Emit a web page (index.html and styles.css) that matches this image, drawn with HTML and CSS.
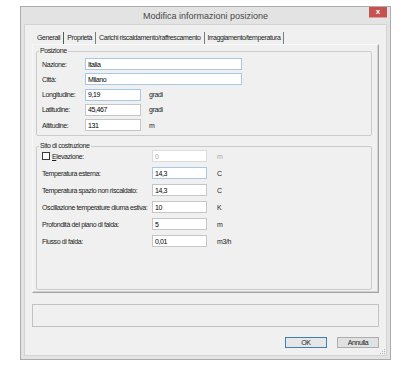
FILE: index.html
```html
<!DOCTYPE html>
<html lang="it">
<head>
    <meta charset="UTF-8">
    <title>Modifica informazioni posizione</title>
    <link rel="stylesheet" href="styles.css">
</head>
<body>
    <div class="window">
        <div class="titlebar">
            <span></span>
            <span class="title">Modifica informazioni posizione</span>
            <span class="close-btn">x</span>
        </div>
        <div class="client">
            <div class="tabs">
                <span class="tab active">Generali</span>
                <span class="tab">Proprietà</span>
                <span class="tab">Carichi riscaldamento/raffrescamento</span>
                <span class="tab">Irraggiamento/temperatura</span>
            </div>

            <div class="tab-page">
                <fieldset class="group">
                    <legend>Posizione</legend>
                    <div class="rows pos-rows">
                        <label>Nazione:</label>
                        <input type="text" class="field hot wide" value="Italia">
                        <label>Città:</label>
                        <input type="text" class="field hot wide" value="Milano">
                        <label>Longitudine:</label>
                        <input type="text" class="field hot" value="9,19">
                        <span class="unit">gradi</span>
                        <label>Latitudine:</label>
                        <input type="text" class="field" value="45,467">
                        <span class="unit">gradi</span>
                        <label>Altitudine:</label>
                        <input type="text" class="field" value="131">
                        <span class="unit">m</span>
                    </div>
                </fieldset>

                <fieldset class="group site">
                    <legend>Sito di costruzione</legend>
                    <div class="rows site-rows">
                        <label class="check-label"><span class="check"></span><span><u>E</u>levazione:</span></label>
                        <input type="text" class="field" value="0" disabled>
                        <span class="unit off">m</span>
                        <label>Temperatura esterna:</label>
                        <input type="text" class="field hot" value="14,3">
                        <span class="unit">C</span>
                        <label>Temperatura spazio non riscaldato:</label>
                        <input type="text" class="field" value="14,3">
                        <span class="unit">C</span>
                        <label>Oscillazione temperature diurna estiva:</label>
                        <input type="text" class="field" value="10">
                        <span class="unit">K</span>
                        <label>Profondità del piano di falda:</label>
                        <input type="text" class="field" value="5">
                        <span class="unit">m</span>
                        <label>Flusso di falda:</label>
                        <input type="text" class="field" value="0,01">
                        <span class="unit">m3/h</span>
                    </div>
                </fieldset>
            </div>

            <div class="message-box"></div>

            <div class="buttons">
                <button type="button" class="btn default">OK</button>
                <button type="button" class="btn">Annulla</button>
            </div>

            <!-- maniglia di ridimensionamento -->
            <svg class="grip" width="7" height="7" viewBox="0 0 7 7">
                <rect x="5" y="1" width="1" height="1" fill="#b5b5b5"/>
                <rect x="3" y="3" width="1" height="1" fill="#b5b5b5"/>
                <rect x="5" y="3" width="1" height="1" fill="#b5b5b5"/>
                <rect x="1" y="5" width="1" height="1" fill="#b5b5b5"/>
                <rect x="3" y="5" width="1" height="1" fill="#b5b5b5"/>
                <rect x="5" y="5" width="1" height="1" fill="#b5b5b5"/>
            </svg>
        </div>
    </div>
</body>
</html>
```

FILE: styles.css
```css
body { margin: 0; background: #fff; font-family: "Liberation Sans", Arial, sans-serif; font-size: 7px; letter-spacing: -0.4px; color: #222; }

.window { box-sizing: border-box; width: 371px; height: 354px; margin: 6px 0 0 20px; border: 1px solid #ababab; background: #e3e3e3; padding: 0 3px 3px; display: flex; flex-direction: column; }
.titlebar { height: 17px; display: grid; grid-template-columns: 1fr auto 1fr; align-items: center; }
.title { font-size: 9px; letter-spacing: 0; color: #474747; }
.close-btn { justify-self: end; align-self: start; width: 18px; height: 11px; box-sizing: border-box; border-bottom: 1px solid #e09a9a; background: #c75050; color: #fff; font-weight: bold; font-size: 8px; line-height: 9px; letter-spacing: 0; text-align: center; }

.client { flex: 1; position: relative; border: 1px solid #d3d3d3; background: #f0f0f0; padding: 7px; display: flex; flex-direction: column; }

.tabs { display: flex; height: 12px; padding-left: 2px; }
.tab { padding: 0 3px; line-height: 12px; border-right: 1px solid #7c7c7c; white-space: nowrap; }
.tab.active { border-right-color: #5a5a5a; }

.tab-page { flex: 1; display: flex; flex-direction: column; border: 1px solid; border-color: #f8f8f8 #a3a3a3 #a3a3a3 #f8f8f8; box-shadow: inset -1px -1px 0 #d2d2d2; padding: 2px 6px 2px 3px; }

.group { margin: 0; min-inline-size: 0; border: 1px solid #cbcbcb; border-radius: 2px; padding: 3px 5px 4px; }
.group legend { padding: 0 1px; margin-left: -3px; line-height: 8px; }
.site { flex: 1; margin-top: 6px; padding-top: 0; }

.rows { display: grid; align-items: center; }
.pos-rows { grid-template-columns: 43px 56px 1fr; row-gap: 3.25px; }
.site-rows { grid-template-columns: 110px 55px 1fr; row-gap: 5px; }
.rows label { white-space: nowrap; }

.field { box-sizing: border-box; width: 100%; height: 12px; margin: 0; padding: 0 2px; border: 1px solid #c6c6c6; background: #fff; color: #000; font: inherit; letter-spacing: inherit; outline: none; }
.field.hot { border-color: #a9c8e6; }
.field.wide { grid-column: 2 / 4; width: 157px; }
.field:disabled { border-color: #dcdcdc; background: #fff; color: #a3a3a3; }

.unit { padding-left: 8px; }
.site-rows .unit { padding-left: 10px; }
.unit.off { color: #a8a8a8; }

.check-label { display: flex; align-items: center; }
.check { width: 6px; height: 6px; border: 1px solid #3a3a3a; background: #fff; margin-right: 2px; }

.message-box { margin-top: 11px; height: 23px; box-sizing: border-box; border: 1px solid #c2c2c2; }

.buttons { margin-top: 10px; display: flex; justify-content: flex-end; gap: 10px; }
.btn { box-sizing: border-box; width: 42px; height: 11px; padding: 0; border: 1px solid #adadad; background: #e1e1e1; color: #222; font: inherit; letter-spacing: inherit; line-height: 9px; }
.btn.default { border-color: #3c7fb1; background: #e6e6e6; }

.grip { position: absolute; right: 0; bottom: 0; }
```
